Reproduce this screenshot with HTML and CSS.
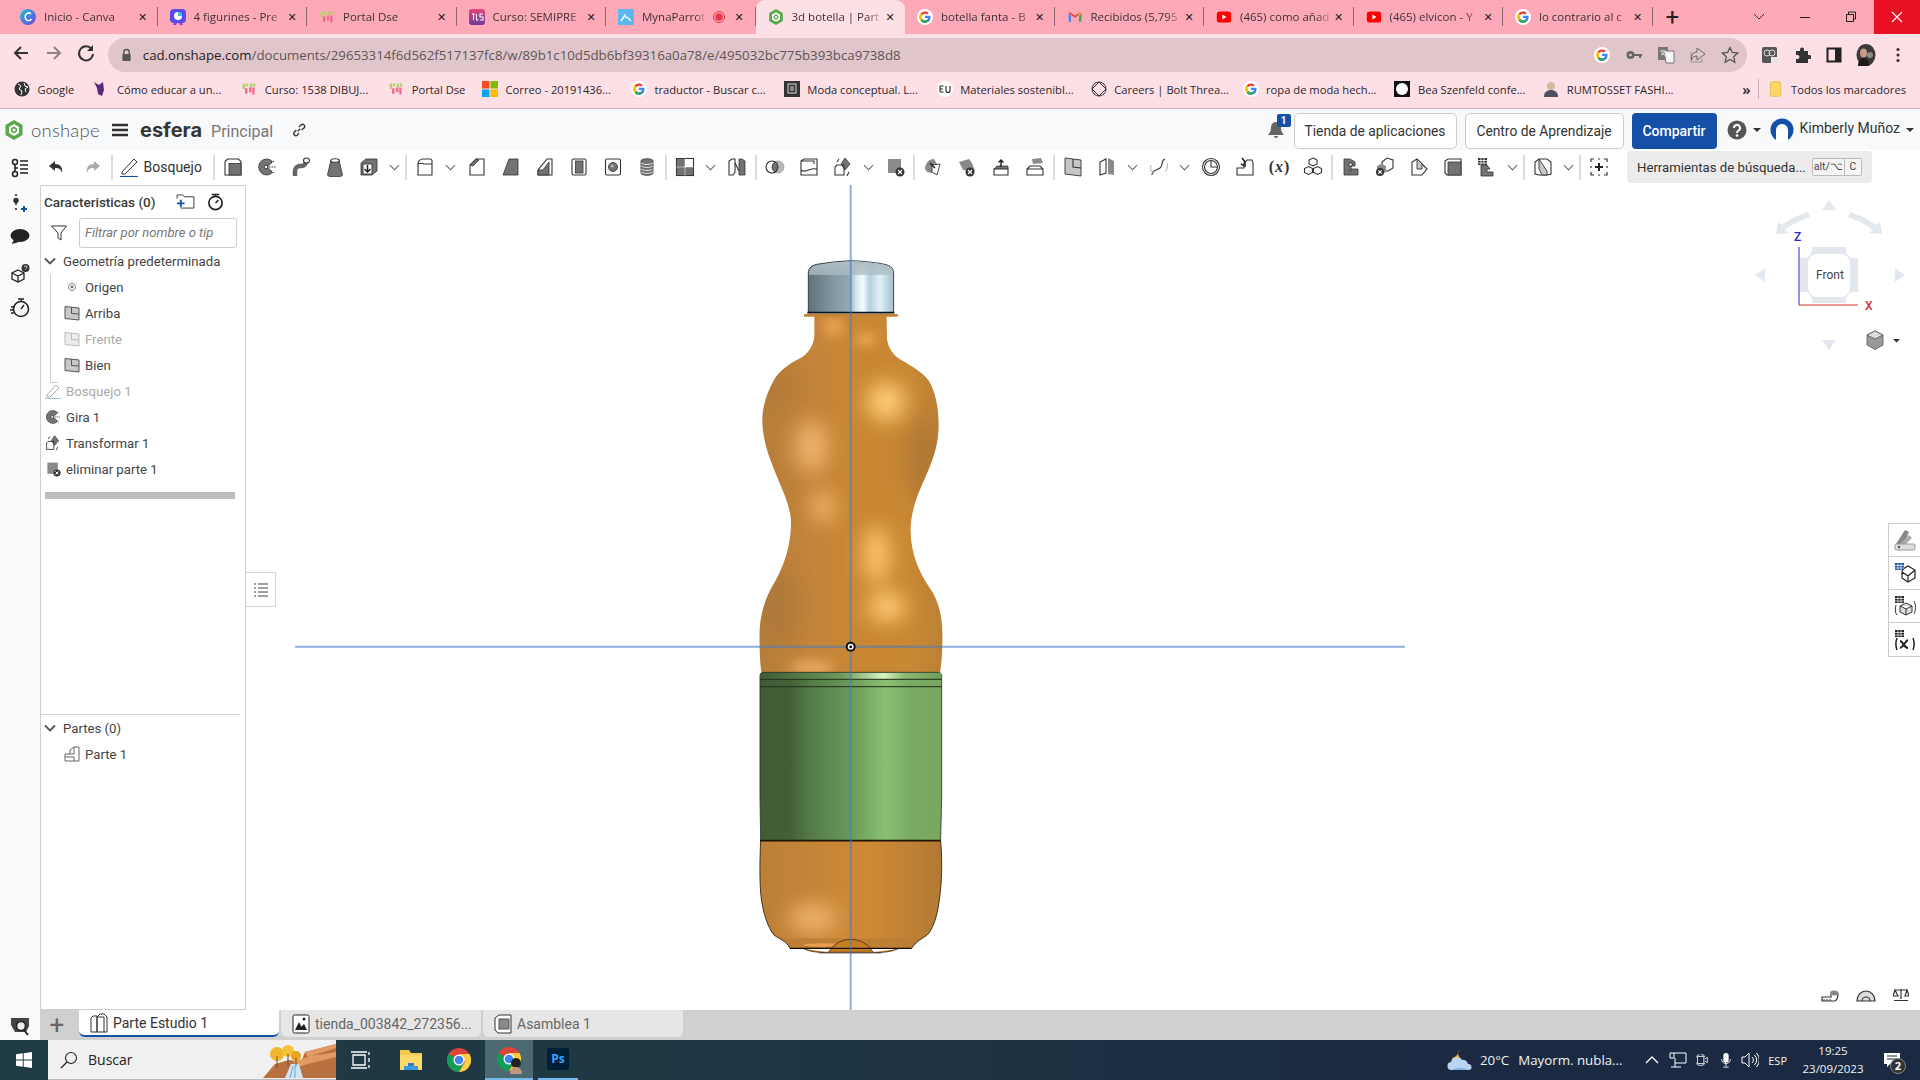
FILE: index.html
```html
<!DOCTYPE html>
<html lang="es">
<head>
<meta charset="utf-8">
<title>3d botella | Part Studio 1</title>
<link rel="stylesheet" href="styles.css">
</head>
<body>
<svg class="defs" width="0" height="0" aria-hidden="true">
  <defs>
    <symbol id="f-g" viewBox="0 0 20 20"><circle cx="10" cy="10" r="10" fill="#fff"/><path d="M16.5 8.4H10v2.9h3.8a3.9 3.9 0 0 1-6.9 1.3L4.5 14.6A7 7 0 0 0 17 10c0-.6-.2-1.1-.5-1.6z" fill="#4285f4"/><path d="M4.5 14.6l2.4-2a4 4 0 0 1-.1-5l-2.4-2a7 7 0 0 0 .1 9z" fill="#fbbc05"/><path d="M4.4 5.6l2.4 2A4 4 0 0 1 12.7 7l2.1-2A7 7 0 0 0 4.4 5.6z" fill="#ea4335"/><path d="M4.5 14.6A7 7 0 0 0 14.6 15.3l-2-1.8a4 4 0 0 1-5.7-.9z" fill="#34a853"/></symbol>
    <symbol id="f-yt" viewBox="0 0 20 20"><rect x="1" y="3" width="18" height="14" rx="4" fill="#f00"/><path d="M8 7l5 3-5 3z" fill="#fff"/></symbol>
    <symbol id="f-gm" viewBox="0 0 20 20"><path d="M2 5v11h3V8z" fill="#4285f4"/><path d="M18 5v11h-3V8z" fill="#34a853"/><path d="M2 5l8 6 8-6-2-1-6 4.500L4 4z" fill="#ea4335"/><path d="M15 8l3-3-1.500-1.500L15 5z" fill="#fbbc05"/></symbol>
    <symbol id="f-os" viewBox="0 0 20 20"><path d="M10 0l8.500 5v10L10 20l-8.500-5V5z" fill="#59a84a"/><path d="M10 4l5 3v6l-5 3-5-3V7z" fill="#fff"/><path d="M10 6.500l3 1.800v3.400L10 13.500 7 11.700V8.300z" fill="#59a84a"/><circle cx="10" cy="10" r="1.500" fill="#fff"/></symbol>
    <symbol id="f-dse" viewBox="0 0 20 20"><path d="M2 3h3v7H2zM6 3h3v4H6zM11 3h3v5h-3zM15 3h3v4h-3z" fill="#b5cf6b"/><path d="M5 9h3v7H5zM10 8h3v6h-3zM14 8h3v9h-3z" fill="#f36b8f"/></symbol>
    <symbol id="f-folder" viewBox="0 0 20 20"><rect x="3" y="1" width="13" height="18" rx="1.500" fill="#fdd663" stroke="#d9a93b" stroke-width=".8"/></symbol>

    <symbol id="t-extrude" viewBox="0 0 20 20"><path class="l" d="M2 4.500 4.500 2h11L18 4.500V18H2z"/><rect class="g" x="6" y="6.500" width="12" height="11.500"/></symbol>
    <symbol id="t-revolve" viewBox="0 0 20 20"><path class="g" d="M15.500 4.500a8 8 0 1 0 0 11L10.500 10z"/><circle class="w" cx="9" cy="10" r="1.800"/><path class="d" d="M12 10h7M14 6l3-2M14 14l3 2"/></symbol>
    <symbol id="t-sweep" viewBox="0 0 20 20"><path class="t" d="M4 19v-5a5 5 0 0 1 5-5h1.500A4.500 4.500 0 0 0 15 4.500"/><ellipse class="l" cx="15.500" cy="3.500" rx="3" ry="2.500"/></symbol>
    <symbol id="t-loft" viewBox="0 0 20 20"><path class="g" d="M6 3h8l3.500 15a7.500 2 0 0 1-15 0z"/><ellipse class="l" cx="10" cy="3.500" rx="4.300" ry="1.800"/></symbol>
    <symbol id="t-thicken" viewBox="0 0 20 20"><path class="g" d="M2 6l5-4h11v12l-5 4H2z"/><path class="w" d="M4 7h9v10H4z"/><path class="b" d="M8.500 8v7M5.500 12l3 3 3-3"/></symbol>
    <symbol id="t-fillet" viewBox="0 0 20 20"><path class="n" d="M3 18V7a5 5 0 0 1 5-5h7a2 2 0 0 1 2 2v14z"/><path class="n" d="M3 7c2-1 4-1 6 0h8"/></symbol>
    <symbol id="t-chamfer" viewBox="0 0 20 20"><path class="n" d="M3 18V8l6-6h8v16z"/><path class="g" d="M3 8l6-6 3 1-6 6z"/></symbol>
    <symbol id="t-draft" viewBox="0 0 20 20"><path class="g" d="M8 2h9v16H2z"/></symbol>
    <symbol id="t-rib" viewBox="0 0 20 20"><path class="n" d="M3 18v-5l9-11h5v16z"/><path class="g" d="M3 13h5l6-8v13H3z"/></symbol>
    <symbol id="t-shell" viewBox="0 0 20 20"><rect class="l" x="3" y="2" width="14" height="16" rx="1.500"/><rect class="g" x="6.500" y="4" width="7.500" height="12"/></symbol>
    <symbol id="t-hole" viewBox="0 0 20 20"><rect class="l" x="2.500" y="2" width="15" height="16" rx="1.500"/><circle class="g" cx="10" cy="10" r="4.500"/><circle class="w2" cx="9" cy="9" r="1.500"/></symbol>
    <symbol id="t-thread" viewBox="0 0 20 20"><path class="g" d="M4 4c0-3 12-3 12 0v12c0 3-12 3-12 0z"/><path class="wl" d="M4 6c3 2 9 2 12 0M4 9c3 2 9 2 12 0M4 12c3 2 9 2 12 0M4 15c3 2 9 2 12 0"/></symbol>
    <symbol id="t-grid" viewBox="0 0 20 20"><rect class="l" x="1.500" y="1.500" width="17" height="17"/><path class="g" d="M1.500 1.500h8v8h-8zM10.500 10.500h8v8h-8zM1.500 10.500h8v8h-8z"/><path class="wl" d="M1.500 10h17M10 1.500v17"/></symbol>
    <symbol id="t-mirror" viewBox="0 0 20 20"><path class="n" d="M2 4l3-2h3v13l-2 3H2z"/><path class="g" d="M12 2h3l3 2v14h-6z"/><path class="n" d="M8 6l4 8"/></symbol>
    <symbol id="t-bool" viewBox="0 0 20 20"><circle class="n" cx="7" cy="10" r="6"/><circle class="g" cx="13" cy="10" r="6" opacity=".5"/><path class="g" d="M10 5a6 6 0 0 1 0 10 6 6 0 0 1 0-10z"/></symbol>
    <symbol id="t-split" viewBox="0 0 20 20"><path class="n" d="M2 4l3-2h13v16H2zM2 4h13v3M2 13c5 4 9-3 16-1"/></symbol>
    <symbol id="t-xform" viewBox="0 0 20 20"><path class="g" d="M12 1l5 6-5 6-4-6z"/><path class="n" d="M2 10l2-2h7v10H2zM4 5l2-3M16 15l-2 4"/></symbol>
    <symbol id="t-del" viewBox="0 0 20 20"><rect class="g2" x="3" y="2" width="13" height="14"/><circle class="k" cx="15" cy="15" r="4.500"/><path class="x" d="M13 13l4 4M17 13l-4 4"/></symbol>
    <symbol id="t-msurf" viewBox="0 0 20 20"><path class="g2" d="M2 12C2 6 6 2 11 2l3 5-5 9-5-1z"/><path class="w" d="M9 8l8-1-3 11-5-3z"/><path class="b" d="M7 6l5 5"/></symbol>
    <symbol id="t-dsurf" viewBox="0 0 20 20"><path class="g2" d="M2 5l10-3 3 4 3 8-12-1z"/><circle class="k" cx="13" cy="15" r="4.500"/><path class="x" d="M11 13l4 4M15 13l-4 4"/></symbol>
    <symbol id="t-msplit" viewBox="0 0 20 20"><path class="g" d="M3 12l3-3h11v3"/><path class="n" d="M3 12h14v6H3z"/><path class="b" d="M10 10V3M7.500 5.500 10 3l2.500 2.500"/></symbol>
    <symbol id="t-offs" viewBox="0 0 20 20"><path class="g2" d="M7 2l9-1 2 5-10 1z"/><path class="n" d="M2 12l3-3h10l3 3v6H2zM2 12h16"/></symbol>
    <symbol id="t-plane" viewBox="0 0 20 20"><path class="g3" d="M2 1l16 2v16l-16-2z"/><path class="n" d="M10 2v8l8 1"/></symbol>
    <symbol id="t-cplane" viewBox="0 0 20 20"><path class="n" d="M3 5l6-3v14l-6 2z"/><path class="g2" d="M11 1l6 3v14l-6-1z"/></symbol>
    <symbol id="t-curve" viewBox="0 0 20 20"><path class="n" d="M3 18c0-5 4-4 8-7s0-7 5-9" stroke-width="1.500"/><path class="lt" d="M2 8c-1 4 0 6 2 8M18 6c1 4 0 7-2 9"/></symbol>
    <symbol id="t-clock" viewBox="0 0 20 20"><circle class="n" cx="10" cy="10" r="8.500"/><circle class="n" cx="10" cy="10" r="6.500"/><path class="n" d="M10 4v6h6"/></symbol>
    <symbol id="t-import" viewBox="0 0 20 20"><path class="n" d="M2 11h7V6l3-3h5l1 3v12H2z"/><path class="b" d="M7 1l3 4M10 5V9L6 7"/></symbol>
    <symbol id="t-cubes" viewBox="0 0 20 20"><path class="n" d="M10 1l4 2v4l-4 2-4-2V3zM5.500 9.500l4 2v4l-4 2-4-2v-4zM14.500 9.500l4 2v4l-4 2-4-2v-4z" stroke-width=".8"/></symbol>
    <symbol id="t-sheet" viewBox="0 0 20 20"><path class="g" d="M3 2h6l5 3v4h-4v3h7v6H3z"/><path class="w" d="M8 6h3v3H8zM8 13h2v2H8z"/></symbol>
    <symbol id="t-sdel" viewBox="0 0 20 20"><path class="l" d="M7 5l5-4 6 2v8l-5 3H7z"/><path class="g2" d="M2 9l4-2 5 2v6l-5 3-4-2z"/><circle class="k" cx="5" cy="15" r="4"/><path class="x" d="M3.300 13.300l3.400 3.400M6.700 13.300l-3.400 3.400"/></symbol>
    <symbol id="t-flat" viewBox="0 0 20 20"><path class="n" d="M3 18V5l5-3 5 5 5 5-5 6z"/><path class="g3" d="M8 2l5 5v5H8z"/></symbol>
    <symbol id="t-box" viewBox="0 0 20 20"><path class="n" d="M2 4l3-2h13v16H4l-2-2z"/><rect class="g" x="5" y="5" width="13" height="13"/></symbol>
    <symbol id="t-stable" viewBox="0 0 20 20"><path class="k2" d="M1 1h9v7H1z"/><path class="wl" d="M1 3.500h9M1 6h9M4 1v7M7 1v7"/><path class="g" d="M4 8h6l3 4h-3v3h6v4H4z"/></symbol>
    <symbol id="t-sect" viewBox="0 0 20 20"><path class="n" d="M2 5l4-3h8l4 3v12l-4 1H6l-4-1z"/><path class="g3" d="M6 2l8 12v4H9L6 12z"/></symbol>
    <symbol id="t-add" viewBox="0 0 20 20"><path class="dd" d="M5 2H2v3M15 2h3v3M18 15v3h-3M5 18H2v-3M9 2h2M9 18h2M2 9v2M18 9v2"/><path class="b2" d="M10 6v8M6 10h8"/></symbol>

    <symbol id="p-plane" viewBox="0 0 16 16"><path fill="#c8c8c8" stroke="#555" stroke-width="1" d="M1 1.500 15 3v12L1 13.500z"/><path fill="none" stroke="#555" d="M7.500 2v6.500L15 9"/></symbol>
    <symbol id="p-plane2" viewBox="0 0 16 16"><path fill="#ececec" stroke="#bbb" stroke-width="1" d="M1 1.500 15 3v12L1 13.500z"/><path fill="none" stroke="#bbb" d="M7.500 2v6.500L15 9"/></symbol>
    <symbol id="chr" viewBox="0 0 24 24"><circle cx="12" cy="12" r="12" fill="#db4437"/><path d="M12 12 1.600 6A12 12 0 0 0 12 24l6-10z" fill="#0f9d58"/><path d="M12 6h10.400A12 12 0 0 1 12 24l6-10z" fill="#ffcd40"/><circle cx="12" cy="12" r="5.500" fill="#fff"/><circle cx="12" cy="12" r="4.300" fill="#4285f4"/></symbol>
  </defs>
</svg>

<header class="tabstrip">
  <div class="tab"><svg class="fav" viewBox="0 0 16 16"><defs><linearGradient id="cv" x1="0" y1="0" x2="1" y2="1"><stop offset="0" stop-color="#14c4d4"/><stop offset="1" stop-color="#7a3de8"/></linearGradient></defs><circle cx="8" cy="8" r="8" fill="url(#cv)"/><path d="M11 5c-3-3-7 1-5.500 4.500S10 12 11.500 10" fill="none" stroke="#fff" stroke-width="1.500"/></svg><span class="tab-t">Inicio - Canva</span><span class="tab-x">✕</span></div>
  <div class="tab"><svg class="fav" viewBox="0 0 16 16"><rect width="16" height="14" rx="4" fill="#5a4ae8"/><path d="M4 14l-1 2h3l1-2zM12 14l1 2h-3l-1-2z" fill="#8a3ee0"/><circle cx="8" cy="7" r="4" fill="#fff"/><path d="M8 7V3a4 4 0 0 1 4 4z" fill="#39c3d9"/></svg><span class="tab-t">4 figurines - Pre</span><span class="tab-x">✕</span></div>
  <div class="tab"><svg class="fav"><use href="#f-dse"/></svg><span class="tab-t">Portal Dse</span><span class="tab-x">✕</span></div>
  <div class="tab"><svg class="fav" viewBox="0 0 16 16"><defs><linearGradient id="tl" x1="0" y1="0" x2="0" y2="1"><stop offset="0" stop-color="#e8457a"/><stop offset="1" stop-color="#6d3a9c"/></linearGradient></defs><rect width="16" height="16" rx="3" fill="url(#tl)"/><path d="M3 5h3M4.500 5v6M7.500 5v6h2M14 5h-3v3h3v3h-3" fill="none" stroke="#fff" stroke-width="1.100"/></svg><span class="tab-t">Curso: SEMIPRE</span><span class="tab-x">✕</span></div>
  <div class="tab"><svg class="fav" viewBox="0 0 16 16"><rect width="16" height="16" fill="#5cb8ee"/><path d="M3 12l4-6 1 3M9 8l4 4" fill="none" stroke="#fff" stroke-width="1.400"/></svg><span class="tab-t tab-t-short">MynaParrot</span><svg class="rec" viewBox="0 0 12 12"><circle cx="6" cy="6" r="5.500" fill="none" stroke="#e5394b"/><circle cx="6" cy="6" r="3.800" fill="#e5394b"/></svg><span class="tab-x">✕</span></div>
  <div class="tab tab-on"><svg class="fav"><use href="#f-os"/></svg><span class="tab-t">3d botella | Part</span><span class="tab-x">✕</span></div>
  <div class="tab"><svg class="fav"><use href="#f-g"/></svg><span class="tab-t">botella fanta - B</span><span class="tab-x">✕</span></div>
  <div class="tab"><svg class="fav"><use href="#f-gm"/></svg><span class="tab-t">Recibidos (5,795</span><span class="tab-x">✕</span></div>
  <div class="tab"><svg class="fav"><use href="#f-yt"/></svg><span class="tab-t">(465) como añad</span><span class="tab-x">✕</span></div>
  <div class="tab"><svg class="fav"><use href="#f-yt"/></svg><span class="tab-t">(465) elvicon - Y</span><span class="tab-x">✕</span></div>
  <div class="tab"><svg class="fav"><use href="#f-g"/></svg><span class="tab-t">lo contrario al c</span><span class="tab-x">✕</span></div>
  <span class="newtab">+</span>
  <div class="winctl">
    <svg class="wi" viewBox="0 0 46 34"><path d="M18 14l5 5 5-5" fill="none" stroke="#333"/></svg>
    <svg class="wi" viewBox="0 0 46 34"><path d="M18 17.500h10" stroke="#222"/></svg>
    <svg class="wi" viewBox="0 0 46 34"><path d="M18.500 14.500h7v7h-7zM20.500 14v-2h7v7h-2" fill="none" stroke="#222"/></svg>
    <svg class="wi wi-close" viewBox="0 0 46 34"><path d="M18 12l10 10M28 12L18 22" stroke="#fff" stroke-width="1.100"/></svg>
  </div>
</header>

<div class="navrow">
  <svg class="nav" viewBox="0 0 20 20"><path d="M17 10H4M10 4l-6 6 6 6" fill="none" stroke="#333" stroke-width="2"/></svg>
  <svg class="nav" viewBox="0 0 20 20"><path d="M3 10h13M10 4l6 6-6 6" fill="none" stroke="#8d8488" stroke-width="2"/></svg>
  <svg class="nav" viewBox="0 0 20 20"><path d="M15.500 6A7 7 0 1 0 17 11" fill="none" stroke="#333" stroke-width="2"/><path d="M17 2v6h-6z" fill="#333"/></svg>
  <div class="omni">
    <svg class="lock" viewBox="0 0 12 14"><path d="M3 6V4a3 3 0 0 1 6 0v2" fill="none" stroke="#555" stroke-width="1.500"/><rect x="1.500" y="6" width="9" height="7.500" rx="1" fill="#555"/></svg>
    <span class="url"><span class="url-d">cad.onshape.com</span>/documents/29653314f6d562f517137fc8/w/89b1c10d5db6bf39316a0a78/e/495032bc775b393bca9738d8</span>
    <span class="omni-i"><svg class="fav"><use href="#f-g"/></svg></span>
    <span class="omni-i"><svg class="nav-s" viewBox="0 0 18 18"><circle cx="5.500" cy="9" r="4" fill="#666"/><circle cx="5.500" cy="9" r="1.300" fill="#e0c4c9"/><path d="M9 8h8v2h-1v2h-2v-2H9z" fill="#666"/></svg></span>
    <span class="omni-i"><svg class="nav-s" viewBox="0 0 18 18"><rect x="1" y="1" width="10" height="13" fill="#777"/><path d="M7 5h10v12H9z" fill="#f4f4f4" stroke="#777"/><path d="M3 5h6M6 4v1M4 9c2-1 3-2 4-4M5 6c0 2 2 3 3 3M12 9l-2 6M12 9l2 6" stroke="#fff" fill="none" stroke-width=".8"/></svg></span>
    <span class="omni-i"><svg class="nav-s" viewBox="0 0 18 18"><path d="M8 2v4c-4 0-6 3-5.500 8 1-3 3-4 5.500-4v4l8-6z" fill="none" stroke="#666"/><path d="M2 6v10h11v-3" fill="none" stroke="#666" opacity=".5"/></svg></span>
    <span class="omni-i"><svg class="nav-s" viewBox="0 0 18 18"><path d="M9 1.500l2.300 5 5.400.6-4 3.700 1.100 5.400L9 13.500l-4.800 2.700 1.100-5.400-4-3.700 5.400-.6z" fill="none" stroke="#555" stroke-width="1.300"/></svg></span>
  </div>
  <div class="navright">
    <span class="omni-i"><svg class="nav-s" viewBox="0 0 18 18"><rect x="1" y="1" width="15" height="16" rx="2" fill="#555"/><circle cx="6" cy="7" r="3" fill="none" stroke="#ddd"/><circle cx="11" cy="7" r="3" fill="none" stroke="#ddd"/><rect x="10" y="11" width="7" height="6" fill="#e6e6e6"/></svg></span>
    <span class="omni-i"><svg class="nav-s" viewBox="0 0 18 18"><path d="M3 5h4V3.500a2 2 0 0 1 4 0V5h4v4h1.500a2 2 0 0 1 0 4H15v4H3v-4h1.500a2 2 0 0 0 0-4H3z" fill="#333"/></svg></span>
    <span class="omni-i"><svg class="nav-s" viewBox="0 0 18 18"><rect x="2.500" y="2.500" width="13" height="13" fill="none" stroke="#222" stroke-width="2"/><rect x="10" y="3" width="5" height="12" fill="#222"/></svg></span>
    <span class="omni-i"><svg class="av" viewBox="0 0 22 22"><ellipse cx="11" cy="11" rx="9.500" ry="11" fill="#3d3839"/><ellipse cx="8.500" cy="9" rx="3.500" ry="4.500" fill="#c99c85"/><path d="M3 22c0-6 3-8 6-8s5 3 5 8z" fill="#1f1b1c"/><circle cx="15" cy="11" r="3" fill="#8a8a8a"/></svg></span>
    <span class="omni-i"><svg class="nav-s" viewBox="0 0 18 18"><circle cx="9" cy="3.500" r="1.600" fill="#333"/><circle cx="9" cy="9" r="1.600" fill="#333"/><circle cx="9" cy="14.500" r="1.600" fill="#333"/></svg></span>
  </div>
</div>

<nav class="bookmarks">
  <span class="bm"><svg class="fav" viewBox="0 0 16 16"><circle cx="8" cy="8" r="7.500" fill="#333"/><path d="M4 3l3 2-2 3 3 2-1 4M10 2l1 3 3 1-3 2 1 3" stroke="#fff" fill="none"/></svg><span class="bm-l w38">Google</span></span>
  <span class="bm"><svg class="fav" viewBox="0 0 16 16"><path d="M1 1l5 3 4-3 1 8-2 6-4-2-1-6z" fill="#5b2b7b"/></svg><span class="bm-l w107">Cómo educar a un...</span></span>
  <span class="bm"><svg class="fav"><use href="#f-dse"/></svg><span class="bm-l w106">Curso: 1538 DIBUJ...</span></span>
  <span class="bm"><svg class="fav"><use href="#f-dse"/></svg><span class="bm-l w53">Portal Dse</span></span>
  <span class="bm"><svg class="fav" viewBox="0 0 16 16"><rect width="7.500" height="7.500" fill="#f25022"/><rect x="8.500" width="7.500" height="7.500" fill="#7fba00"/><rect y="8.500" width="7.500" height="7.500" fill="#00a4ef"/><rect x="8.500" y="8.500" width="7.500" height="7.500" fill="#ffb900"/></svg><span class="bm-l w108">Correo - 20191436...</span></span>
  <span class="bm"><svg class="fav"><use href="#f-g"/></svg><span class="bm-l w112">traductor - Buscar c...</span></span>
  <span class="bm"><svg class="fav" viewBox="0 0 16 16"><rect width="16" height="16" fill="#333"/><rect x="4" y="3" width="8" height="9" fill="none" stroke="#ddd"/><rect x="6" y="5" width="4" height="5" fill="#888"/></svg><span class="bm-l w112">Moda conceptual. L...</span></span>
  <span class="bm"><svg class="fav" viewBox="0 0 16 16"><circle cx="8" cy="8" r="8" fill="#fff"/><path d="M3 5h3.500M3 8h3M3 11h3.500M3 5v6M9 5v4.500a2 2 0 0 0 4 0V5" fill="none" stroke="#222" stroke-width="1.100"/></svg><span class="bm-l w113">Materiales sostenibl...</span></span>
  <span class="bm"><svg class="fav" viewBox="0 0 16 16"><path d="M8 1l7 7-7 7-7-7z" fill="none" stroke="#333"/><circle cx="8" cy="8" r="7" fill="none" stroke="#333"/></svg><span class="bm-l w111">Careers | Bolt Threa...</span></span>
  <span class="bm"><svg class="fav"><use href="#f-g"/></svg><span class="bm-l w111">ropa de moda hech...</span></span>
  <span class="bm"><svg class="fav" viewBox="0 0 16 16"><rect width="16" height="16" fill="#111"/><circle cx="8" cy="8" r="6" fill="#fff"/></svg><span class="bm-l w108">Bea Szenfeld confe...</span></span>
  <span class="bm"><svg class="fav" viewBox="0 0 16 16"><path d="M1 16c0-5 3-7 7-7s7 2 7 7z" fill="#4e4f63"/><circle cx="8" cy="5" r="4" fill="#d8bb9e"/></svg><span class="bm-l w108">RUMTOSSET FASHI...</span></span>
  <span class="bm-more">»</span>
  <span class="bm-sep"></span>
  <span class="bm bm-all"><svg class="fav"><use href="#f-folder"/></svg>Todos los marcadores</span>
</nav>

<div class="app">
  <aside class="rail">
    <svg class="rail-i" viewBox="0 0 20 20"><circle cx="5" cy="4" r="2.500" fill="none" stroke="#222" stroke-width="1.500"/><circle cx="5" cy="16" r="2.500" fill="none" stroke="#222" stroke-width="1.500"/><path d="M5 6.500v7M5 10h3M10 3h8M10 7h8M10 11h8M10 15h8" stroke="#222" stroke-width="1.600"/></svg>
    <svg class="rail-i" viewBox="0 0 20 20"><path d="M6 1v2M6 15v2M6 10v2" stroke="#222" stroke-width="1.500"/><circle cx="6" cy="7.500" r="2.700" fill="#333"/><path d="M14 13v6M11 16h6" stroke="#1450a8" stroke-width="2"/></svg>
    <svg class="rail-i rail-c" viewBox="0 0 20 20"><ellipse cx="10" cy="8.500" rx="9.500" ry="6.500" fill="#222"/><path d="M2 17l2-5 5 3z" fill="#222"/></svg>
    <svg class="rail-i" viewBox="0 0 20 20"><path d="M8 7l6 3v6l-6 3-6-3v-6zM2 10l6 3 6-3M8 13v6" fill="none" stroke="#222" stroke-width="1.300"/><circle cx="15.500" cy="5" r="4" fill="#333"/><path d="M14 4c.5-1.500 3-1.500 3 0s-1.500 1-1.500 2.500" fill="none" stroke="#fff" stroke-width=".8"/></svg>
    <svg class="rail-i" viewBox="0 0 20 20"><circle cx="11" cy="11" r="7.500" fill="none" stroke="#222" stroke-width="1.600"/><path d="M8 1h6M11 1v3M11 11l3-4M1 9h3M0 12h3M1 15h3" stroke="#222" stroke-width="1.400"/></svg>
    <svg class="rail-i rail-search" viewBox="0 0 20 20"><path d="M1 2h18v8l-3 6H5L1 9z" fill="#444"/><circle cx="11" cy="10" r="4.500" fill="#eee" stroke="#222" stroke-width="1.600"/><path d="M14 14l4 5" stroke="#222" stroke-width="2"/></svg>
  </aside>

  <div class="work">
    <header class="ohead">
      <div class="brand">
        <svg class="ologo"><use href="#f-os"/></svg>
        <span class="oname">onshape</span>
        <svg class="burger" viewBox="0 0 16 14"><path d="M0 2h16M0 7h16M0 12h16" stroke="#333" stroke-width="2.400"/></svg>
        <span class="docname">esfera</span>
        <span class="branch">Principal</span>
        <svg class="linki" viewBox="0 0 16 16"><path d="M6.500 9.500 9.500 6.500M5 8l-2.500 2.500a2.500 2.500 0 0 0 3.500 3.500L8 11.500M8 4.500 10.500 2a2.500 2.500 0 0 1 3.500 3.500L11 8" fill="none" stroke="#333" stroke-width="1.500"/></svg>
      </div>
      <div class="hright">
        <span class="bell"><svg viewBox="0 0 18 20" width="18" height="20"><path d="M9 2a5 5 0 0 0-5 5c0 5-2 7-3 8h16c-1-1-3-3-3-8a5 5 0 0 0-5-5zM7 16a2 2 0 0 0 4 0z" fill="#666"/></svg><span class="badge">1</span></span>
        <button class="hbtn hbtn-a">Tienda de aplicaciones</button>
        <button class="hbtn hbtn-b">Centro de Aprendizaje</button>
        <button class="hbtn-p">Compartir</button>
        <svg class="help" viewBox="0 0 20 20"><circle cx="10" cy="10" r="9.500" fill="#555"/><path d="M7 8a3 3 0 1 1 4.500 2.500c-1 .6-1.500 1-1.500 2.500" fill="none" stroke="#fff" stroke-width="2"/><circle cx="10" cy="15.500" r="1.300" fill="#fff"/></svg>
        <span class="caret"></span>
        <svg class="user" viewBox="0 0 24 24"><circle cx="12" cy="12" r="11.500" fill="#1450a8"/><path d="M6 24V12a6 6 0 0 1 12 0v12z" fill="#fff"/><circle cx="12" cy="11" r="4.500" fill="#fff"/></svg>
        <span class="uname">Kimberly Muñoz</span>
        <span class="caret"></span>
      </div>
    </header>

    <div class="tools">
      <svg class="undo" viewBox="0 0 18 18"><path d="M7 3 1 8l6 5v-3c4 0 6 1 7 5 1-6-2-9-7-9z" fill="#333"/></svg>
      <svg class="undo" viewBox="0 0 18 18"><path d="M11 3l6 5-6 5v-3c-4 0-6 1-7 5-1-6 2-9 7-9z" fill="#aaa"/></svg>
      <span class="tsep"></span>
      <span class="sketch"><svg class="pencil" viewBox="0 0 20 20"><path d="M2 15 14 2l3 3L5 17H2z" fill="none" stroke="#333"/><path d="M0 19.500h18" stroke="#1450a8" stroke-width="1.200"/></svg>Bosquejo</span>
      <span class="tsep tsep-m"></span>
      <span class="ti"><svg><use href="#t-extrude"/></svg></span>
      <span class="ti"><svg><use href="#t-revolve"/></svg></span>
      <span class="ti"><svg><use href="#t-sweep"/></svg></span>
      <span class="ti"><svg><use href="#t-loft"/></svg></span>
      <span class="ti"><svg><use href="#t-thicken"/></svg></span>
      <span class="tc"></span><span class="tsep"></span>
      <span class="ti"><svg><use href="#t-fillet"/></svg></span>
      <span class="tc"></span>
      <span class="ti"><svg><use href="#t-chamfer"/></svg></span>
      <span class="ti"><svg><use href="#t-draft"/></svg></span>
      <span class="ti"><svg><use href="#t-rib"/></svg></span>
      <span class="ti"><svg><use href="#t-shell"/></svg></span>
      <span class="ti"><svg><use href="#t-hole"/></svg></span>
      <span class="ti"><svg><use href="#t-thread"/></svg></span>
      <span class="tsep"></span>
      <span class="ti"><svg><use href="#t-grid"/></svg></span>
      <span class="tc"></span>
      <span class="ti"><svg><use href="#t-mirror"/></svg></span>
      <span class="tsep"></span>
      <span class="ti"><svg><use href="#t-bool"/></svg></span>
      <span class="ti"><svg><use href="#t-split"/></svg></span>
      <span class="ti"><svg><use href="#t-xform"/></svg></span>
      <span class="tc"></span>
      <span class="ti"><svg><use href="#t-del"/></svg></span>
      <span class="tsep"></span>
      <span class="ti"><svg><use href="#t-msurf"/></svg></span>
      <span class="ti"><svg><use href="#t-dsurf"/></svg></span>
      <span class="ti"><svg><use href="#t-msplit"/></svg></span>
      <span class="ti"><svg><use href="#t-offs"/></svg></span>
      <span class="tsep"></span>
      <span class="ti"><svg><use href="#t-plane"/></svg></span>
      <span class="ti"><svg><use href="#t-cplane"/></svg></span>
      <span class="tc"></span>
      <span class="ti"><svg><use href="#t-curve"/></svg></span>
      <span class="tc"></span>
      <span class="ti"><svg><use href="#t-clock"/></svg></span>
      <span class="ti"><svg><use href="#t-import"/></svg></span>
      <span class="ti ti-fx">(<i>x</i>)</span>
      <span class="ti"><svg><use href="#t-cubes"/></svg></span>
      <span class="tsep"></span>
      <span class="ti"><svg><use href="#t-sheet"/></svg></span>
      <span class="ti"><svg><use href="#t-sdel"/></svg></span>
      <span class="ti"><svg><use href="#t-flat"/></svg></span>
      <span class="ti"><svg><use href="#t-box"/></svg></span>
      <span class="ti"><svg><use href="#t-stable"/></svg></span>
      <span class="tc"></span><span class="tsep"></span>
      <span class="ti"><svg><use href="#t-sect"/></svg></span>
      <span class="tc"></span><span class="tsep"></span>
      <span class="ti"><svg><use href="#t-add"/></svg></span>
      <div class="tsearch">Herramientas de búsqueda...<kbd class="kbd kbd-a">alt/⌥</kbd><kbd class="kbd kbd-c">C</kbd></div>
    </div>

    <div class="main">
      <section class="panel">
        <div class="features">
          <div class="phead"><span>Caracteristicas (0)</span>
            <svg class="ph-i ph-folder" viewBox="0 0 20 16"><path d="M1 5V1h6l2 2h10v12H5" fill="none" stroke="#333"/><path d="M5 6v8M1 10h8" stroke="#1450a8" stroke-width="2"/></svg>
            <svg class="ph-i ph-timer" viewBox="0 0 18 18"><circle cx="9" cy="10" r="7" fill="none" stroke="#222" stroke-width="1.800"/><path d="M5 1h8M9 1v2M9 10l3-3" stroke="#222" stroke-width="1.600"/></svg>
          </div>
          <div class="filter">
            <svg class="fun" viewBox="0 0 16 16"><path d="M.5 1h15L10 8v7l-3-2V8z" fill="none" stroke="#333"/></svg>
            <input class="finput" placeholder="Filtrar por nombre o tip">
          </div>
          <div class="row row-h"><svg class="chev" viewBox="0 0 12 8"><path d="M1 1.500l5 5 5-5" fill="none" stroke="#555" stroke-width="1.800"/></svg>Geometría predeterminada</div>
          <div class="tree">
            <div class="row row-s"><span class="orig"><svg viewBox="0 0 8 8" width="8" height="8"><circle cx="4" cy="4" r="3.500" fill="none" stroke="#666" stroke-width=".8"/><circle cx="4" cy="4" r="1.400" fill="#666"/></svg></span>Origen</div>
            <div class="row row-s"><svg class="pi"><use href="#p-plane"/></svg>Arriba</div>
            <div class="row row-s row-dim"><svg class="pi"><use href="#p-plane2"/></svg>Frente</div>
            <div class="row row-s"><svg class="pi"><use href="#p-plane"/></svg>Bien</div>
          </div>
          <div class="row row-f row-dim"><svg class="fi" viewBox="0 0 16 16"><path d="M2 12 11 2l3 3-9 9H2z" fill="none" stroke="#aaa"/><path d="M0 15.500h16" stroke="#aac0e0"/></svg>Bosquejo 1</div>
          <div class="row row-f"><svg class="fi"><use href="#t-revolve"/></svg>Gira 1</div>
          <div class="row row-f"><svg class="fi"><use href="#t-xform"/></svg>Transformar 1</div>
          <div class="row row-f"><svg class="fi"><use href="#t-del"/></svg>eliminar parte 1</div>
          <div class="pbar"></div>
        </div>
        <div class="parts">
          <div class="row row-h"><svg class="chev" viewBox="0 0 12 8"><path d="M1 1.500l5 5 5-5" fill="none" stroke="#555" stroke-width="1.800"/></svg>Partes (0)</div>
          <div class="row row-part"><svg class="pi" viewBox="0 0 16 16"><path d="M1 15V8h5V4l4-3h5v14zM1 8l0 0M6 8h4V1M1 11h9v4" fill="#fff" stroke="#666"/></svg>Parte 1</div>
        </div>
      </section>

      <div class="canvas">
        <svg class="scene" viewBox="246 185 1674 825">
          <defs>
            <linearGradient id="body" x1="0" x2="1" y1="0" y2="0"><stop offset="0" stop-color="#b67e3a"/><stop offset=".3" stop-color="#c4843a"/><stop offset=".5" stop-color="#c98733"/><stop offset=".8" stop-color="#c98834"/><stop offset="1" stop-color="#ba8035"/></linearGradient>
            <linearGradient id="cap" x1="0" x2="1" y1="0" y2="0"><stop offset="0" stop-color="#5f7079"/><stop offset=".25" stop-color="#7f939d"/><stop offset=".47" stop-color="#91a7b2"/><stop offset=".56" stop-color="#d3e7f0"/><stop offset=".64" stop-color="#f4fcff"/><stop offset=".72" stop-color="#b4cfdc"/><stop offset=".84" stop-color="#def2fa"/><stop offset="1" stop-color="#a6bdc9"/></linearGradient>
            <linearGradient id="capt" x1="0" x2="0" y1="0" y2="1"><stop offset="0" stop-color="#aebcc4"/><stop offset="1" stop-color="#aebcc4" stop-opacity="0"/></linearGradient>
            <linearGradient id="lab" x1="0" x2="1" y1="0" y2="0"><stop offset="0" stop-color="#3f5c35"/><stop offset=".16" stop-color="#425f37"/><stop offset=".3" stop-color="#557f49"/><stop offset=".5" stop-color="#6a9a59"/><stop offset=".69" stop-color="#8ac074"/><stop offset=".82" stop-color="#79ab63"/><stop offset="1" stop-color="#78a860"/></linearGradient>
            <linearGradient id="base" x1="0" x2="1" y1="0" y2="0"><stop offset="0" stop-color="#ba7f37"/><stop offset=".6" stop-color="#cf8a36"/><stop offset="1" stop-color="#af7834"/></linearGradient>
            <linearGradient id="strip" x1="0" x2="1" y1="0" y2="0"><stop offset="0" stop-color="#3f5c35"/><stop offset=".45" stop-color="#6a9a59"/><stop offset=".68" stop-color="#d8f3c0"/><stop offset=".8" stop-color="#88b86f"/><stop offset="1" stop-color="#6f9f5a"/></linearGradient>
            <filter id="b30" x="-150%" y="-150%" width="400%" height="400%"><feGaussianBlur stdDeviation="30"/></filter>
            <filter id="b18" x="-100%" y="-100%" width="300%" height="300%"><feGaussianBlur stdDeviation="18"/></filter>
            <clipPath id="bodyclip"><path d="M343 258L343 320C340 350 320 375 300 385C270 400 240 420 222 450C200 490 187 530 187 570C187 640 215 700 235 750C255 795 273 840 273 880C273 950 250 1010 225 1055C200 1095 178 1150 178 1220C178 1260 180 1300 185 1330L720 1330C725 1300 728 1260 728 1220C728 1160 715 1110 690 1075C660 1030 632 975 632 900C632 850 650 800 668 760C695 700 716 650 716 585C716 530 705 480 685 450C660 420 620 400 595 385C575 370 562 345 561 325L560 258Z"/></clipPath>
            <clipPath id="baseclip"><path d="M182 632L722 632C728 700 725 760 718 810C712 860 700 890 688 908C675 925 655 925 635 955L270 955C258 930 240 930 222 915C205 895 188 850 182 790C178 730 180 680 182 632Z"/></clipPath>
          </defs>
          <g transform="translate(700 230) scale(.3333)">
            <g clip-path="url(#bodyclip)">
              <rect x="170" y="250" width="570" height="1090" fill="url(#body)"/>
              <ellipse cx="670" cy="690" rx="60" ry="130" fill="#96693a" opacity=".4" filter="url(#b30)"/>
              <ellipse cx="240" cy="1130" rx="60" ry="110" fill="#9c6e3c" opacity=".4" filter="url(#b30)"/>
              <ellipse cx="230" cy="470" rx="70" ry="70" fill="#a87337" opacity=".35" filter="url(#b30)"/>
              <ellipse cx="400" cy="290" rx="28" ry="30" fill="#eba653" filter="url(#b18)"/>
              <ellipse cx="498" cy="328" rx="30" ry="16" fill="#f4b35f" filter="url(#b18)"/>
              <ellipse cx="558" cy="515" rx="58" ry="58" fill="#ffca73" filter="url(#b30)"/>
              <ellipse cx="335" cy="650" rx="50" ry="78" fill="#efb16b" filter="url(#b30)"/>
              <ellipse cx="370" cy="830" rx="36" ry="46" fill="#f4b267" filter="url(#b30)"/>
              <ellipse cx="530" cy="975" rx="40" ry="88" fill="#ffc26b" filter="url(#b30)"/>
              <ellipse cx="560" cy="1130" rx="58" ry="46" fill="#ffc771" filter="url(#b30)"/>
              <ellipse cx="335" cy="1315" rx="65" ry="24" fill="#e8a85e" filter="url(#b18)"/>
            </g>
            <path d="M325 248V125Q328 108 350 103Q400 94 452 92Q510 94 555 103Q578 108 581 125V248Z" fill="url(#cap)" stroke="#1f2a30" stroke-width="2.500"/>
            <path d="M327 248V125Q330 110 350 105Q400 96 452 94Q510 96 555 105Q576 110 579 125V135H327Z" fill="url(#capt)"/>
            <path d="M322 248H583" stroke="#0e1418" stroke-width="5"/>
            <rect x="312" y="252" width="282" height="8" rx="2" fill="#c58535"/>
          </g>
          <g transform="translate(700 630) scale(.3333)">
            <path d="M180 140Q180 127 190 127H715Q725 127 725 140L725 500L722 632H182L180 500Z" fill="url(#lab)" stroke="#2a3328" stroke-width="2.500"/>
            <rect x="181" y="129" width="543" height="18" fill="url(#strip)"/>
            <path d="M180 148H725M180 170H725" stroke="#26331f" stroke-width="3.500" opacity=".85"/>
            <g clip-path="url(#baseclip)">
              <rect x="170" y="625" width="570" height="340" fill="url(#base)"/>
              <ellipse cx="340" cy="865" rx="75" ry="45" fill="#eeb067" filter="url(#b30)"/>
              <rect x="170" y="925" width="570" height="35" fill="#b97c33" opacity=".7"/>
              <ellipse cx="370" cy="945" rx="60" ry="5" fill="#e6a050"/>
            </g>
            <path d="M182 632C180 680 178 730 182 790C188 850 205 895 222 915C240 930 258 930 270 955M722 632C728 700 725 760 718 810C712 860 700 890 688 908C675 925 655 925 635 955" fill="none" stroke="#2a1a08" stroke-width="2.500"/>
            <path d="M310 956Q340 970 385 967M595 956Q565 970 520 967" fill="#c4832f" stroke="#2a1a08" stroke-width="2"/>
            <path d="M385 967Q410 928 452 928Q495 928 520 967Z" fill="#c67e22" stroke="#2a1a08" stroke-width="2"/>
            <path d="M358 969H545" stroke="#2a1a08" stroke-width="2"/>
            <path d="M270 955H635" stroke="#120a02" stroke-width="4"/>
            <path d="M180 632H722" stroke="#1c1205" stroke-width="5"/>
          </g>
          <path class="axis" d="M295 646.700H1405M850.700 185V1010"/>
          <circle cx="850.700" cy="646.700" r="5" fill="#111"/><circle cx="850.700" cy="646.700" r="3" fill="#fff"/><circle cx="850.700" cy="646.700" r="1.500" fill="#111"/>
        </svg>

        <button class="ptoggle"><svg viewBox="0 0 16 16" width="16" height="16"><path d="M1 2h2M5 2h10M1 6h2M5 6h10M1 10h2M5 10h10M1 14h2M5 14h10" stroke="#444" stroke-width="1.200"/></svg></button>

        <div class="vcube">
          <svg viewBox="0 0 180 180" width="180" height="180">
            <g fill="#e2e8ee">
              <path d="M89 10l7 10H82zM15 85l10-7v14zM165 85l-10-7v14zM89 160l-7-10h14z"/>
              <path d="M68 22C55 26 47 31 42 35l-4-3-2 12 13-1-4-3c5-4 13-9 25-13zM110 22c13 4 21 9 26 13l4-3 2 12-13-1 4-3c-5-4-13-9-25-13z"/>
              <path d="M72 57h34v3a8 8 0 0 0 8 8h4v34h-4a8 8 0 0 0-8 8v3H72v-3a8 8 0 0 0-8-8h-4V68h4a8 8 0 0 0 8-8z"/>
            </g>
            <rect x="68" y="64" width="42" height="43" rx="9" fill="#fff"/>
            <path d="M59 57v58" stroke="#2828c8" stroke-width="1"/>
            <path d="M59 115h59" stroke="#d83030" stroke-width="1"/>
            <path d="M127 145l8-4 8 4v10l-8 4.500-8-4.500z" fill="#999" stroke="#555" stroke-width=".8"/>
            <path d="M127 145l8 4 8-4-8-4z" fill="#ddd" stroke="#555" stroke-width=".8"/>
            <path d="M153 149h7l-3.500 3.500z" fill="#333"/>
          </svg>
          <span class="vc-t vc-front">Front</span>
          <span class="vc-t vc-z">Z</span>
          <span class="vc-t vc-x">X</span>
        </div>

        <div class="sidetools">
          <span class="st"><svg viewBox="0 0 22 22" width="22" height="22"><path d="M2 15 11 1l4 2-5 12z" fill="#888"/><path d="M6 15l9-9 3 3-6 6z" fill="#aaa"/><rect x="1" y="15" width="20" height="6" rx="1.500" fill="#ddd" stroke="#999"/><circle cx="5" cy="18" r="1.200" fill="#555"/></svg></span>
          <span class="st"><svg viewBox="0 0 22 22" width="22" height="22"><path d="M9 7l5-3 7 4v8l-7 4-6-4V10zM8 10l6 4 7-6M14 14v6" fill="#fff" stroke="#222" stroke-width="1.200"/><path d="M1 1h9v7H1z" fill="#1450a8"/><path d="M1 3.500h9M1 6h9M4 1v7M7 1v7" stroke="#fff" stroke-width=".7"/></svg></span>
          <span class="st"><svg viewBox="0 0 22 22" width="22" height="22"><path d="M6 11l6-3 6 3v6l-6 3-6-3zM6 11l6 3 6-3M12 14v6" fill="#ddd" stroke="#333"/><path d="M1 1h9v7H1z" fill="#222"/><path d="M1 3.500h9M1 6h9M4 1v7M7 1v7" stroke="#fff" stroke-width=".7"/><path d="M2 10c-1 4-1 8 1 10M20 6c2 4 2 9 0 13" fill="none" stroke="#333"/></svg></span>
          <span class="st"><svg viewBox="0 0 22 22" width="22" height="22"><path d="M1 1h9v7H1z" fill="#222"/><path d="M1 3.500h9M1 6h9M4 1v7M7 1v7" stroke="#fff" stroke-width=".7"/><path d="M3 9c-1.500 4-1.500 8 0 12M19 9c1.500 4 1.500 8 0 12" fill="none" stroke="#222" stroke-width="1.500"/><path d="M6 12c3 0 4 7 8 7M14 11c-3 1-4 7-8 8" fill="none" stroke="#222" stroke-width="2"/></svg></span>
        </div>

        <div class="measures">
          <svg viewBox="0 0 18 14" width="18" height="14"><path d="M1 13V9h9c-1-5 7-7 7-3 0 2 0 5-3 7z" fill="none" stroke="#333" stroke-width="1.200"/><ellipse cx="13" cy="5" rx="4" ry="2.500" fill="#888"/><path d="M3 11v2M6 11v2M9 11v2" stroke="#333"/></svg>
          <svg viewBox="0 0 20 14" width="20" height="14"><path d="M1 13a9 10 0 0 1 18 0zM6 13a4 4 0 0 1 8 0" fill="#ddd" stroke="#333" stroke-width="1.200"/></svg>
          <svg viewBox="0 0 16 14" width="16" height="14"><path d="M8 1v10M2 2h12M2 2 0 8h5zM14 2l-2 6h4zM1 12.500h14" fill="none" stroke="#333" stroke-width="1.200"/></svg>
        </div>
      </div>
    </div>

    <footer class="dtabs">
      <span class="dplus">+</span>
      <span class="dtab dtab-on"><svg class="dt-i" viewBox="0 0 18 20"><path d="M1 5l2-2h4v16H1zM7 4l3-3h4l3 3v15H7zM7 4h7v15" fill="#fff" stroke="#333"/></svg>Parte Estudio 1</span>
      <span class="dtab"><svg class="dt-i" viewBox="0 0 18 20"><rect x="1" y="1" width="16" height="18" rx="1.500" fill="#fff" stroke="#222"/><path d="M3 16l4-8 4 8zM9 13l3-3 3 6H9z" fill="#222"/><circle cx="12" cy="5" r="1.500" fill="#222"/></svg>tienda_003842_272356...</span>
      <span class="dtab"><svg class="dt-i" viewBox="0 0 18 20"><path d="M1 4l4-3h12v18H4l-3-3z" fill="#fff" stroke="#333"/><rect x="5" y="5" width="10" height="10" fill="#888" stroke="#555"/></svg>Asamblea 1</span>
    </footer>
  </div>
</div>

<footer class="taskbar">
  <span class="start"><svg viewBox="0 0 16 16" width="16" height="16"><path d="M0 2.300 6.800 1.300v6.200H0zM7.700 1.200 16 0v7.500H7.700zM0 8.500h6.800v6.200L0 13.700zM7.700 8.500H16V16l-8.300-1.200z" fill="#fff"/></svg></span>
  <div class="tsb">
    <svg class="mag" viewBox="0 0 18 18"><circle cx="11" cy="7" r="5.500" fill="none" stroke="#222" stroke-width="1.100"/><path d="M7 11l-6 6" stroke="#222" stroke-width="1.200"/></svg>
    <span class="tsb-t">Buscar</span>
    <svg class="tsb-art" viewBox="0 0 73 36"><path d="M0 36 12 22l14-4 12 2L42 10l31-8v34z" fill="#b8703f"/><path d="M30 20l18-6 25-4v5l-24 6-15 4zM42 10l31-8v4l-28 9z" fill="#e09a62"/><path d="M22 36l6-14h8l4 14z" fill="#cfe4f2"/><path d="M27 36l3-12M32 36V24" stroke="#6ba6d0"/><circle cx="14" cy="12" r="7" fill="#f0b72a"/><circle cx="25" cy="9" r="6" fill="#f4c23b"/><circle cx="33" cy="14" r="5" fill="#e8a41e"/><path d="M14 14v12M25 12v12M33 16v8" stroke="#7a4c20"/></svg>
  </div>
  <span class="tk"><svg viewBox="0 0 20 20" width="20" height="20"><path d="M3 5h12v10H3zM1 2h16M1 18h16M19 2v3M19 8v4M19 15v3" fill="none" stroke="#fff" stroke-width="1.300"/></svg></span>
  <span class="tk tk-e"><svg viewBox="0 0 24 22" width="24" height="22"><path d="M1 1h9l2 3h11v17H1z" fill="#f5c94e"/><rect x="1" y="6" width="22" height="15" fill="#ffd96a"/><rect x="9" y="14" width="6" height="7" fill="#2d7fd3"/><rect x="5" y="17" width="14" height="4" fill="#3a9be0"/></svg></span>
  <span class="tk tk-c"><svg class="chr"><use href="#chr"/></svg></span>
  <span class="tk tk-on"><svg class="chr"><use href="#chr"/></svg><svg class="chr-a" viewBox="0 0 14 16"><circle cx="7" cy="5" r="5" fill="#222"/><path d="M1 16c0-5 3-7 6-7s6 2 6 7z" fill="#c09580"/></svg></span>
  <span class="tk tk-ps"><span class="ps">Ps</span></span>

  <div class="tray">
    <svg class="wx" viewBox="0 0 26 24"><path d="M13 1a6 6 0 0 0 2 10l-8 2-2-3c3-1 5-2 6-5z" fill="#f5a623"/><path d="M5 22a4 4 0 0 1-1-8 6 6 0 0 1 11-2 5 5 0 0 1 6 4 3 3 0 0 1 1 6z" fill="#b9d4f1"/><path d="M5 22c6-3 12-2 17 0z" fill="#7fb0e4"/></svg>
    <span class="tray-t">20°C</span>
    <span class="tray-t tray-w">Mayorm. nubla...</span>
    <svg class="tri tri-up" viewBox="0 0 14 8"><path d="M1 7l6-6 6 6" fill="none" stroke="#fff" stroke-width="1.300"/></svg>
    <svg class="tri" viewBox="0 0 18 16"><path d="M1 1h16v10H6M1 1v5h4V1M6 6v9M2 15h10M4 4" fill="none" stroke="#fff"/></svg>
    <svg class="tri" viewBox="0 0 14 18"><path d="M1 6a3 3 0 0 1 3-3M6 3h1a3 3 0 0 1 3 3M1 12a3 3 0 0 0 3 3h3a3 3 0 0 0 3-3M2 5v8h7V5zM10 8l3-2v6l-3-2" fill="none" stroke="#fff" stroke-width=".9"/></svg>
    <svg class="tri" viewBox="0 0 12 18"><rect x="3" y="1" width="6" height="11" rx="3" fill="#fff"/><path d="M1 8a5 5 0 0 0 10 0M6 13v3M3 17h6" fill="none" stroke="#fff"/></svg>
    <svg class="tri" viewBox="0 0 18 16"><path d="M1 5h3l4-4v14l-4-4H1zM11 5a4 4 0 0 1 0 6M13.500 3a7 7 0 0 1 0 10M15.500 1a10 10 0 0 1 0 14" fill="none" stroke="#fff"/></svg>
    <span class="tray-t tray-esp">ESP</span>
    <span class="clock"><span>19:25</span><span>23/09/2023</span></span>
    <span class="notif"><svg viewBox="0 0 18 16" width="18" height="16"><path d="M1 1h16v11H7l-3 3v-3H1z" fill="#fff"/><path d="M4 4h10M4 7h10" stroke="#1b2a42"/></svg><span class="nbadge">2</span></span>
  </div>
</footer>
</body>
</html>
```
FILE: styles.css
```css
* { box-sizing: border-box; }
html, body { margin: 0; padding: 0; }
body { width: 1920px; height: 1080px; overflow: hidden; display: flex; flex-direction: column; background: #fff; font-family: "Roboto", "Liberation Sans", sans-serif; color: #333; }
.defs { position: absolute; }
svg { display: block; flex: none; }
.l { fill: #fff; stroke: #333; stroke-width: 1.100; }
.n { fill: none; stroke: #333; stroke-width: 1.100; }
.g { fill: #737373; stroke: #333; stroke-width: .8; }
.g2 { fill: #8a8a8a; stroke: none; }
.g3 { fill: #c6c6c6; stroke: #333; stroke-width: .9; }
.w { fill: #fff; stroke: #333; stroke-width: .9; }
.w2 { fill: #bbb; stroke: none; }
.t { fill: none; stroke: #666; stroke-width: 4.500; }
.d { fill: none; stroke: #333; stroke-width: 1; stroke-dasharray: 1.500 1; }
.b { fill: none; stroke: #222; stroke-width: 1.500; }
.b2 { fill: none; stroke: #222; stroke-width: 2; }
.dd { fill: none; stroke: #333; stroke-width: 1.200; }
.wl { fill: none; stroke: #fff; stroke-width: .8; }
.k { fill: #333; stroke: none; }
.k2 { fill: #333; stroke: none; }
.x { fill: none; stroke: #fff; stroke-width: 1.200; }
.lt { fill: none; stroke: #999; stroke-width: .8; }

/* browser tab strip */
.tabstrip { height: 34px; flex: none; background: #fea9b8; display: flex; padding-left: 8px; position: relative; }
.tab { width: 149.500px; height: 34px; flex: none; display: flex; align-items: center; padding-left: 12px; padding-right: 9px; position: relative; font-family: "Open Sans", sans-serif; font-size: 11.500px; color: #3c3236; }
.tab::after { content: ""; position: absolute; right: 0; top: 7px; height: 19px; width: 1px; background: #8a6a72; }
.tab-on { background: #fde0e5; border-radius: 9px 9px 0 0; }
.tab-on::after { display: none; }
.fav { width: 16px; height: 16px; flex: none; }
.tab-t { flex: 1; margin-left: 8px; padding-bottom: 2px; white-space: nowrap; overflow: hidden; -webkit-mask-image: linear-gradient(90deg, #000 82%, transparent); mask-image: linear-gradient(90deg, #000 82%, transparent); }
.tab-t-short { flex: 0 0 65px; }
.rec { width: 12px; height: 12px; margin-left: 6px; margin-right: 8px; }
.tab-x { width: 12px; text-align: center; font-size: 11px; font-weight: 700; color: #222; font-family: "DejaVu Sans", sans-serif; }
.newtab { font-size: 24px; font-weight: 400; line-height: 34px; margin-left: 13px; color: #222; }
.winctl { margin-left: auto; display: flex; }
.wi { width: 46px; height: 34px; }
.wi-close { background: #e81123; }

/* address row */
.navrow { height: 38px; flex: none; background: #fde0e5; display: flex; align-items: center; padding-left: 5px; }
.nav { width: 20px; height: 20px; margin: 0 6.300px; flex: none; }
.omni { margin-left: 5px; width: 1639px; height: 34px; margin-top: 4px; border-radius: 17px; background: #e0c6cb; display: flex; align-items: center; padding-left: 13px; padding-right: 1px; }
.lock { width: 11px; height: 14px; }
.url { font-family: "Open Sans", sans-serif; font-size: 13.250px; color: #5f5458; margin-left: 11px; flex: 1; white-space: nowrap; }
.url-d { color: #28211f; }
.omni-i { width: 32px; height: 32px; display: flex; align-items: center; justify-content: center; flex: none; }
.nav-s { width: 18px; height: 18px; }
.navright { margin-left: 7px; display: flex; align-items: center; margin-top: 4px; }
.av { width: 22px; height: 22px; }

/* bookmarks */
.bookmarks { height: 37px; flex: none; background: #fde0e5; border-bottom: 1px solid #c9b3b8; display: flex; align-items: center; padding-left: 14px; padding-bottom: 2px; font-family: "Open Sans", sans-serif; font-size: 11.200px; color: #2e2629; }
.bm { display: flex; align-items: center; gap: 7.500px; margin-right: 17.400px; white-space: nowrap; }
.bm-l { white-space: nowrap; flex: none; }
.w38 { width: 38.500px; }
.w53 { width: 53px; }
.w106 { width: 106px; }
.w107 { width: 107px; }
.w108 { width: 108px; }
.w111 { width: 111px; }
.w112 { width: 112px; }
.w113 { width: 113px; }
.bm-more { margin-left: auto; font-size: 15px; margin-right: 7px; color: #222; font-weight: 600; }
.bm-sep { width: 1px; height: 20px; background: #c9b3b8; margin-right: 9px; }
.bm-all { margin-right: 14px; }

/* app shell */
.app { flex: 1; display: flex; min-height: 0; }
.rail { width: 40px; flex: none; display: flex; flex-direction: column; align-items: center; padding-top: 49px; position: relative; z-index: 1; background: transparent; }
.rail::before { content: ""; position: absolute; left: 0; right: 0; top: 41px; bottom: 0; background: #fafafa; z-index: -1; }
.rail-i { width: 20px; height: 20px; margin-bottom: 15px; }
.rail-c { margin-top: -1px; margin-bottom: 16px; }
.rail-search { margin-top: auto; margin-bottom: 4px; }
.work { flex: 1; display: flex; flex-direction: column; min-width: 0; margin-left: -40px; }

/* onshape header */
.ohead { height: 41px; flex: none; background: #f8f9fb; display: flex; align-items: center; padding-left: 4px; }
.brand { display: flex; align-items: center; }
.ologo { width: 20px; height: 22px; }
.oname { font-family: "Lato", sans-serif; font-weight: 300; font-size: 18.500px; color: #555; margin-left: 7px; width: 72px; letter-spacing: .2px; }
.burger { width: 16px; height: 14px; margin-left: 9px; }
.docname { font-family: "Inter", sans-serif; font-weight: 700; font-size: 20px; color: #333; margin-left: 12px; }
.branch { font-size: 16px; color: #777; margin-left: 9px; margin-top: 3px; }
.linki { width: 14px; height: 14px; margin-left: 19px; }
.hright { margin-left: auto; display: flex; align-items: center; padding-right: 6px; }
.bell { position: relative; margin-right: 9px; }
.badge { position: absolute; right: -6px; top: -6px; width: 14px; height: 13px; background: #1450a8; color: #fff; font-size: 10px; font-weight: 700; text-align: center; line-height: 13px; border-radius: 2px; }
.hbtn { height: 36px; border: 1px solid #ccc; background: #fff; border-radius: 5px; font-family: inherit; font-size: 13.800px; color: #333; margin-right: 8px; margin-top: 2px; padding: 0; }
.hbtn-a { width: 163px; }
.hbtn-b { width: 159px; }
.hbtn-p { width: 85px; height: 36px; border: 0; background: #1450a8; color: #fff; border-radius: 4px; font-family: inherit; font-size: 14px; font-weight: 500; padding: 0; margin-right: 10px; margin-top: 2px; }
.help { width: 20px; height: 20px; margin-right: 6px; }
.caret { width: 0; height: 0; border-left: 4px solid transparent; border-right: 4px solid transparent; border-top: 4px solid #333; }
.user { width: 24px; height: 24px; margin-left: 9px; }
.uname { font-size: 14px; color: #333; margin-left: 6px; margin-right: 6px; margin-top: -4px; }

/* toolbar */
.tools { height: 35px; flex: none; background: #fff; display: flex; align-items: center; padding-left: 40px; padding-bottom: 1px; }
.undo { width: 18px; height: 18px; margin: 0 8.500px; }
.tools .undo:first-child { margin-left: 8px; }
.tsep { width: 2px; height: 25px; background: #dcdcdc; margin: 0 1px; flex: none; }
.sketch { display: flex; align-items: center; font-size: 14px; color: #333; gap: 4px; padding-left: 6px; width: 98.500px; }
.pencil { width: 20px; height: 20px; }
.ti { width: 34px; height: 34px; display: flex; align-items: center; justify-content: center; flex: none; }
.ti svg { width: 20px; height: 20px; }
.ti-fx { font-family: "Liberation Serif", serif; font-size: 16px; font-weight: 700; color: #333; }
.ti-fx i { margin: 0 1px; }
.tc { width: 18px; height: 34px; flex: none; position: relative; }
.tc::after { content: ""; position: absolute; left: 5px; top: 12px; width: 6px; height: 6px; border-right: 1.500px solid #666; border-bottom: 1.500px solid #666; transform: rotate(45deg); }
.tsearch { margin-left: 11px; width: 245px; height: 32px; background: #ececec; border-radius: 4px; display: flex; align-items: center; padding-left: 10px; font-size: 13.200px; color: #333; white-space: nowrap; }
.kbd { font-family: inherit; font-size: 10.500px; height: 18px; line-height: 16px; border: 1px solid #bbb; text-align: center; background: #f4f4f4; color: #444; }
.kbd-a { width: 33px; margin-left: 6px; border-radius: 2px 0 0 2px; }
.kbd-c { width: 17px; border-left: 0; border-radius: 0 2px 2px 0; }

/* main */
.main { flex: 1; display: flex; min-height: 0; padding-left: 40px; }
.panel { width: 206px; flex: none; background: #fff; border: 1px solid #cfcfcf; display: flex; flex-direction: column; height: 825px; }
.features { height: 529px; margin-right: 5px; border-bottom: 1px solid #d4d4d4; flex: none; }
.phead { height: 31px; display: flex; align-items: center; padding-left: 3px; font-size: 13.500px; font-weight: 500; color: #3a3a3a; }
.ph-i { flex: none; }
.ph-folder { width: 19px; height: 15px; margin-left: 21px; }
.ph-timer { width: 17px; height: 18px; margin-left: 12px; }
.filter { height: 31px; display: flex; align-items: center; padding-left: 10px; }
.fun { width: 16px; height: 16px; }
.finput { width: 158px; height: 30px; margin-left: 12px; border: 1px solid #ccc; border-radius: 3px; padding: 0 5px; font-family: inherit; font-size: 13px; font-style: italic; background: #fff; }
.finput::placeholder { color: #777; opacity: 1; }
.row { height: 26px; display: flex; align-items: center; font-size: 13.200px; color: #444; white-space: nowrap; }
.row-h { padding-left: 3px; }
.chev { width: 12px; height: 8px; margin-right: 7px; }
.tree { position: relative; }
.tree::before { content: ""; position: absolute; left: 9px; top: 0; bottom: -5px; width: 1px; background: #ccc; }
.tree::after { content: ""; position: absolute; left: 9px; bottom: -5px; width: 8px; height: 1px; background: #ccc; }
.row-s { padding-left: 23px; }
.orig { width: 16px; display: flex; justify-content: center; margin-right: 5px; }
.pi { width: 16px; height: 16px; margin-right: 5px; flex: none; }
.row-dim { color: #aaa; }
.row-f { padding-left: 4px; }
.fi { width: 16px; height: 16px; margin-right: 5px; flex: none; }
.pbar { height: 7px; background: #bdbdbd; margin: 10px 0 0 4px; width: 190px; }
.parts { flex: 1; }
.row-part { padding-left: 23px; }

/* canvas */
.canvas { flex: 1; position: relative; min-width: 0; background: #fff; }
.scene { position: absolute; left: 0; top: 0; width: 1674px; height: 825px; }
.axis { fill: none; stroke: #417bc8; stroke-opacity: .6; stroke-width: 2; }
.ptoggle { position: absolute; left: 0; top: 387px; width: 30px; height: 35px; padding: 0; display: flex; align-items: center; justify-content: center; background: #fff; border: 1px solid #d4d4d4; border-left: 0; }
.vcube { position: absolute; right: 0; top: 5px; width: 180px; height: 180px; }
.vc-t { position: absolute; font-size: 12px; }
.vc-front { left: 76px; top: 78px; color: #444; }
.vc-z { left: 54px; top: 40px; color: #2828c8; font-weight: 500; }
.vc-x { left: 125px; top: 109px; color: #d83030; font-weight: 500; }
.sidetools { position: absolute; right: 0; top: 338px; width: 32px; border: 1px solid #ccc; border-right: 0; background: #fff; }
.st { height: 33px; display: flex; align-items: center; justify-content: center; border-bottom: 1px solid #ccc; }
.st:last-child { border-bottom: 0; }
.measures { position: absolute; right: 11px; bottom: 8px; display: flex; gap: 17px; align-items: flex-end; }

/* document tabs */
.dtabs { height: 30px; flex: none; margin-left: 40px; background: #d0d0d0; display: flex; align-items: flex-start; }
.dplus { width: 39px; padding-right: 5px; text-align: center; font-size: 26px; line-height: 30px; color: #666; }
.dtab { width: 200px; height: 27px; margin-right: 2px; background: #e6e6e6; border-radius: 0 0 6px 6px; display: flex; align-items: center; padding-left: 11px; font-size: 14px; color: #666; white-space: nowrap; }
.dtab-on { background: #fff; color: #333; border-bottom: 2px solid #1450a8; }
.dt-i { width: 18px; height: 20px; margin-right: 5px; }

/* taskbar */
.taskbar { height: 40px; flex: none; background: linear-gradient(90deg, #1f3b44 0, #1f3844 35%, #1b2a42 75%, #1b2a42 100%); display: flex; align-items: center; color: #fff; font-family: "Open Sans", sans-serif; }
.start { width: 48px; height: 40px; display: flex; align-items: center; justify-content: center; }
.tsb { width: 288px; height: 40px; background: #f0f0f0; display: flex; align-items: center; padding-left: 12px; border-bottom: 1px solid #bbb; position: relative; overflow: hidden; }
.mag { width: 18px; height: 18px; }
.tsb-t { font-size: 14px; color: #222; margin-left: 10px; }
.tsb-art { position: absolute; right: 0; top: 0; width: 73px; height: 40px; }
.tk { width: 48px; height: 40px; display: flex; align-items: center; justify-content: center; position: relative; flex: none; }
.tk-e { margin-left: 3px; }
.tk-c { margin-right: 2px; }
.chr { width: 24px; height: 24px; }
.chr-a { position: absolute; left: 24px; top: 18px; width: 14px; height: 16px; }
.tk-on { background: #4c6a72; border-bottom: 2px solid #76b9ed; }
.tk-ps { width: 40px; margin-left: 5px; border-bottom: 2px solid #76b9ed; }
.ps { width: 22px; height: 22px; background: #001e36; color: #31a8ff; border-radius: 3px; font-size: 12px; font-weight: 700; text-align: center; line-height: 22px; }
.tray { margin-left: auto; display: flex; align-items: center; padding-right: 15px; }
.wx { width: 26px; height: 24px; margin-right: 7px; }
.tray-t { font-size: 13.300px; color: #f2f2f2; white-space: nowrap; }
.tray-w { margin-left: 9px; margin-right: 23px; width: 104px; }
.tri { width: 18px; height: 16px; margin-right: 6px; }
.tri-up { width: 14px; height: 8px; margin-right: 10px; }
.tray-esp { font-size: 11px; margin-left: 3px; margin-right: 16px; }
.clock { display: flex; flex-direction: column; align-items: center; font-size: 11.500px; line-height: 18px; color: #f2f2f2; width: 60px; }
.notif { position: relative; margin-left: 20px; width: 22px; }
.nbadge { position: absolute; left: 7px; top: 6px; width: 16px; height: 16px; border-radius: 50%; background: #333; border: 1px solid #888; font-size: 11px; font-weight: 700; text-align: center; line-height: 14px; }
```
